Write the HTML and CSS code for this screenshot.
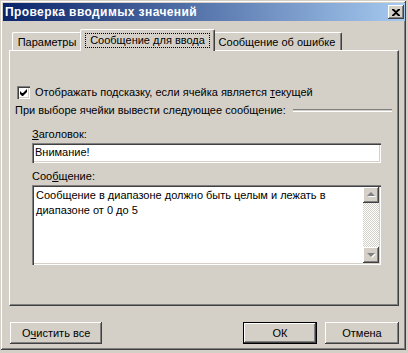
FILE: index.html
```html
<!DOCTYPE html>
<html lang="ru">

<head>
    <meta charset="utf-8">
    <title>Проверка вводимых значений</title>
    <link rel="stylesheet" href="styles.css">
</head>

<body>
    <div class="window">
        <div class="titlebar">
            <span class="title">Проверка вводимых значений</span>
            <button class="close">
                <svg width="8" height="7" viewBox="0 0 8 7">
                    <path d="M0 0h2l2 2 2-2h2v1l-3 2.5 3 2.5v1h-2l-2-2-2 2h-2v-1l3-2.5-3-2.5z" fill="#000"/>
                </svg>
            </button>
        </div>

        <div class="content">
            <div class="tabs">
                <div class="tab forste">Параметры</div>
                <div class="tab valgt"><span class="fokus">Сообщение для ввода</span></div>
                <div class="tab tredje">Сообщение об ошибке</div>
            </div>

            <div class="panel">
                <label class="check">
                    <span class="box">
                        <svg width="7" height="7" viewBox="0 0 7 7">
                            <path d="M0 2v3l2 2h1l4-4v-3l-4 4h-1z" fill="#000"/>
                        </svg>
                    </span>
                    <span>Отображать подсказку, если ячейка является <u>т</u>екущей</span>
                </label>

                <div class="gruppe">
                    <span>При выборе ячейки вывести следующее сообщение:</span>
                    <span class="linje"></span>
                </div>

                <p class="etiket"><u>З</u>аголовок:</p>
                <div class="felt">Внимание!</div>

                <p class="etiket">Соо<u>б</u>щение:</p>
                <div class="tekst">
                    <p>Сообщение в диапазоне должно быть целым и лежать в диапазоне от 0 до 5</p>
                    <div class="scroll">
                        <span class="pil op"></span>
                        <span class="spor"></span>
                        <span class="pil ned"></span>
                    </div>
                </div>
            </div>

            <div class="knapper">
                <button class="knap">О<u>ч</u>истить все</button>
                <span class="fyld"></span>
                <button class="knap standard">ОК</button>
                <button class="knap">Отмена</button>
            </div>
        </div>
    </div>
</body>

</html>
```

FILE: styles.css
```css
body {
    margin: 0;
    background-color: #d4d0c8;
    font-family: 'Liberation Sans', Arial, sans-serif;
    font-size: 11px;
    color: #000;
}

.window {
    width: 406px;
    height: 350px;
    box-sizing: border-box;
    padding: 3px 1px 3px 3px;
    background-color: #d4d0c8;
    box-shadow: inset 1px 1px #d4d0c8, inset -1px -1px #404040, inset 2px 2px #fff, inset -2px -2px #808080;
}

.titlebar {
    height: 18px;
    display: flex;
    align-items: center;
    padding: 0 1px 0 2px;
    background: linear-gradient(to right, #0a246a, #a6caf0);
}

.title {
    flex: 1;
    color: #fff;
    font-weight: bold;
    font-size: 12px;
    letter-spacing: 0.4px;
}

.close {
    width: 16px;
    height: 14px;
    padding: 0;
    border: none;
    display: flex;
    align-items: center;
    justify-content: center;
    background-color: #d4d0c8;
    box-shadow: inset -1px -1px #404040, inset 1px 1px #fff, inset -2px -2px #808080;
}

.content {
    padding: 8px 0 0 6px;
}

/* faner */
.tabs {
    display: flex;
    align-items: flex-end;
    height: 21px;
    padding-left: 3px;
    position: relative;
    z-index: 1;
}

.tab {
    height: 18px;
    box-sizing: border-box;
    padding-top: 3px;
    text-align: center;
    border: 1px solid #fff;
    border-right-color: #404040;
    border-bottom: none;
    border-radius: 2px 2px 0 0;
    box-shadow: inset -1px 0 #808080;
    background-color: #d4d0c8;
}

.forste {
    width: 70px;
}

.tredje {
    width: 129px;
}

.tab.valgt {
    width: 135px;
    height: 22px;
    margin: 0 -2px -1px;
    padding-top: 4px;
    position: relative;
}

.tab.valgt + .tab {
    border-left: none;
}

.fokus {
    display: inline-block;
    padding: 0 4px;
    outline: 1px dotted #000;
    line-height: 13px;
}

.panel {
    height: 256px;
    width: 390px;
    box-sizing: border-box;
    border: 1px solid #fff;
    border-right-color: #404040;
    border-bottom-color: #404040;
    box-shadow: inset -1px -1px #808080;
    padding: 35px 17px 0 5px;
}

.check {
    display: flex;
    align-items: center;
    gap: 5px;
    margin-left: 2px;
    line-height: 13px;
}

.box {
    width: 13px;
    height: 13px;
    box-sizing: border-box;
    display: flex;
    align-items: center;
    justify-content: center;
    background-color: #fff;
    box-shadow: inset 1px 1px #808080, inset 2px 2px #404040, inset -1px -1px #fff, inset -2px -2px #d4d0c8;
}

.gruppe {
    display: flex;
    align-items: center;
    margin-top: 5px;
    line-height: 13px;
    margin-right: -11px;
}

.linje {
    flex: 1;
    margin-left: 7px;
    height: 1px;
    border-top: 1px solid #808080;
    border-bottom: 1px solid #fff;
}

.etiket {
    margin: 11px 0 2px 17px;
    line-height: 13px;
}

.felt {
    margin-left: 17px;
    height: 20px;
    box-sizing: border-box;
    padding: 3px 3px 0;
    background-color: #fff;
    line-height: 13px;
    box-shadow: inset 1px 1px #808080, inset 2px 2px #404040, inset -1px -1px #fff, inset -2px -2px #d4d0c8;
}

.felt + .etiket {
    margin-top: 7px;
}

.tekst {
    margin-left: 17px;
    height: 80px;
    box-sizing: border-box;
    padding: 2px;
    display: flex;
    background-color: #fff;
    box-shadow: inset 1px 1px #808080, inset 2px 2px #404040, inset -1px -1px #fff, inset -2px -2px #d4d0c8;
}

.tekst p {
    flex: 1;
    margin: 0;
    padding: 1px 2px;
    line-height: 15px;
}

.scroll {
    width: 16px;
    display: flex;
    flex-direction: column;
}

.spor {
    flex: 1;
    background: repeating-conic-gradient(#fff 0 25%, #d4d0c8 0 50%) 0 0 / 2px 2px;
}

.pil {
    height: 16px;
    position: relative;
    background-color: #d4d0c8;
    box-shadow: inset -1px -1px #404040, inset 1px 1px #fff, inset -2px -2px #808080;
}

.pil::after {
    content: "";
    position: absolute;
    left: 4px;
    width: 0;
    height: 0;
    border-left: 4px solid transparent;
    border-right: 4px solid transparent;
    filter: drop-shadow(1px 1px #fff);
}

.pil.op::after {
    top: 5px;
    border-bottom: 4px solid #808080;
}

.pil.ned::after {
    top: 6px;
    border-top: 4px solid #808080;
}

/* knapper */
.knapper {
    display: flex;
    gap: 8px;
    margin-top: 16px;
    width: 390px;
}

.fyld {
    flex: 1;
}

.knap {
    height: 22px;
    min-width: 74px;
    padding: 0 12px;
    border: none;
    font-family: inherit;
    font-size: 11px;
    color: #000;
    background-color: #d4d0c8;
    box-shadow: inset -1px -1px #404040, inset 1px 1px #fff, inset -2px -2px #808080;
}

.knap:first-child {
    margin-left: 1px;
    min-width: 86px;
}

.knap.standard {
    box-shadow: inset 0 0 0 1px #000, inset -2px -2px #404040, inset 2px 2px #fff, inset -3px -3px #808080;
}
```
